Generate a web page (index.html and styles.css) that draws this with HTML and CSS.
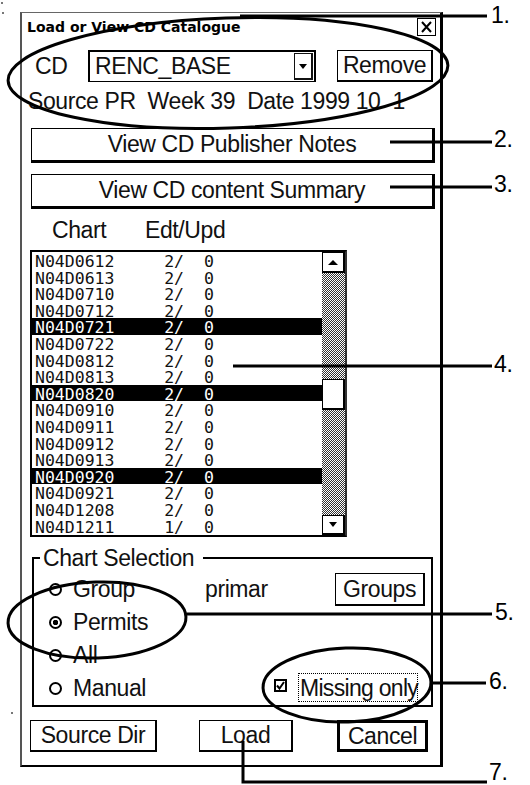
FILE: index.html
```html
<!DOCTYPE html>
<html lang="en">
<head>
  <meta charset="UTF-8" />
  <meta name="viewport" content="width=device-width, initial-scale=1.0"/>
  <title>Load or View CD Catalogue</title>
  <link rel="stylesheet" href="styles.css">
</head>
<body>
  <div class="dialog">
    <div class="titlebar">
      <span class="title">Load or View CD Catalogue</span>
      <span class="close">
        <svg width="17" height="16" viewBox="0 0 17 16"><path d="M4 3 L13 13 M13 3 L4 13" stroke="#000" stroke-width="2"/></svg>
      </span>
    </div>

    <div class="cd-row">
      <span class="cd-label">CD</span>
      <div class="combo">
        <span class="combo-text">RENC_BASE</span>
        <span class="combo-btn"><span class="tri-down"></span></span>
      </div>
      <button type="button" class="btn btn-remove">Remove</button>
    </div>

    <div class="source">Source PR  Week 39  Date 1999 10  1</div>

    <button type="button" class="btn wide">View CD Publisher Notes</button>
    <button type="button" class="btn wide second">View CD content Summary</button>

    <div class="list-head"><span class="h-chart">Chart</span><span>Edt/Upd</span></div>

    <div class="list">
      <div class="rows">
        <div class="row">N04D0612     2/  0</div>
        <div class="row">N04D0613     2/  0</div>
        <div class="row">N04D0710     2/  0</div>
        <div class="row">N04D0712     2/  0</div>
        <div class="row sel">N04D0721     2/  0</div>
        <div class="row">N04D0722     2/  0</div>
        <div class="row">N04D0812     2/  0</div>
        <div class="row">N04D0813     2/  0</div>
        <div class="row sel">N04D0820     2/  0</div>
        <div class="row">N04D0910     2/  0</div>
        <div class="row">N04D0911     2/  0</div>
        <div class="row">N04D0912     2/  0</div>
        <div class="row">N04D0913     2/  0</div>
        <div class="row sel">N04D0920     2/  0</div>
        <div class="row">N04D0921     2/  0</div>
        <div class="row">N04D1208     2/  0</div>
        <div class="row">N04D1211     1/  0</div>
      </div>
      <div class="scrollbar">
        <span class="sb-btn up"><span class="tri-up"></span></span>
        <span class="track-top"></span>
        <span class="thumb"></span>
        <span class="track-rest"></span>
        <span class="sb-btn down"><span class="tri-down"></span></span>
      </div>
    </div>

    <fieldset class="selection">
      <legend>Chart Selection</legend>
      <div class="sel-row">
        <span class="opt"><span class="radio"></span>Group</span>
        <span>primar</span>
        <button type="button" class="btn btn-groups">Groups</button>
      </div>
      <div class="sel-row">
        <span class="opt"><span class="radio on"></span>Permits</span>
      </div>
      <div class="sel-row">
        <span class="opt"><span class="radio"></span>All</span>
      </div>
      <div class="sel-row">
        <span class="opt"><span class="radio"></span>Manual</span>
        <span class="missing">
          <span class="check">
            <svg width="9" height="9" viewBox="0 0 9 9"><path d="M1 4.5 L3.5 7.5 L8 1" stroke="#000" stroke-width="2" fill="none"/></svg>
          </span>
          <span class="focus">Missing only</span>
        </span>
      </div>
    </fieldset>

    <div class="actions">
      <button type="button" class="btn btn-source">Source Dir</button>
      <button type="button" class="btn btn-load">Load</button>
      <button type="button" class="btn btn-cancel">Cancel</button>
    </div>
  </div>

  <!-- callout annotations drawn over the dialog -->
  <svg class="callouts" width="530" height="785" viewBox="0 0 530 785">
    <g fill="none" stroke="#000" stroke-width="3">
      <ellipse cx="228" cy="73" rx="220" ry="55" transform="rotate(-2 228 73)"/>
      <ellipse cx="97" cy="620" rx="89" ry="38" transform="rotate(-2 97 620)"/>
      <ellipse cx="347" cy="685" rx="84" ry="37" transform="rotate(-2 347 685)"/>
      <path d="M240 16 H487"/>
      <path d="M390 142 H492"/>
      <path d="M390 187 H492"/>
      <path d="M233 366 H492"/>
      <path d="M187 614 H492"/>
      <path d="M430 683 H486"/>
      <path d="M243 741 V782 H487"/>
    </g>
    <g class="nums">
      <text x="491" y="23">1.</text>
      <text x="494" y="147">2.</text>
      <text x="494" y="192">3.</text>
      <text x="494" y="372">4.</text>
      <text x="495" y="620">5.</text>
      <text x="489" y="689">6.</text>
      <text x="489" y="780">7.</text>
    </g>
    <g fill="#777">
      <rect x="1" y="2" width="2" height="2"/>
      <rect x="2" y="12" width="2" height="2"/>
      <rect x="11" y="712" width="2" height="2"/>
    </g>
  </svg>
</body>
</html>
```

FILE: styles.css
```css
body {
  margin: 0;
  background: #fff;
  color: #111;
  font-family: "Liberation Sans", Arial, sans-serif;
  font-size: 23px;
  letter-spacing: -0.4px;
}
.dialog {
  margin: 12px 0 0 20px;
  width: 423px;
  height: 755px;
  box-sizing: border-box;
  border-top: 1px solid #666;
  border-left: 2px solid #555;
  border-right: 3px solid #000;
  border-bottom: 2px solid #000;
  display: flex;
  flex-direction: column;
}
.titlebar {
  height: 27px;
  display: flex;
  align-items: center;
  justify-content: space-between;
  padding: 0 4px 0 5px;
}
.title {
  font: bold 14px "DejaVu Sans", sans-serif;
  letter-spacing: 0;
  color: #000;
}
.close {
  width: 19px;
  height: 18px;
  box-sizing: border-box;
  border: 1px solid #000;
  display: flex;
}
.btn {
  font: inherit;
  letter-spacing: inherit;
  color: #111;
  background: #fff;
  padding: 0;
  box-sizing: border-box;
  border-style: solid;
  border-color: #000;
  border-width: 1px 2px 2px 1px;
  line-height: 1;
  white-space: nowrap;
}
.cd-row {
  margin-top: 10px;
  height: 32px;
  display: flex;
  align-items: center;
  padding-left: 13px;
}
.cd-label {
  width: 53px;
}
.combo {
  width: 228px;
  height: 32px;
  box-sizing: border-box;
  border: 2px solid #000;
  border-width: 2px 2px 1px 2px;
  display: flex;
  align-items: center;
}
.combo-text {
  flex: 1;
  padding-left: 5px;
}
.combo-btn {
  width: 19px;
  height: 27px;
  margin-right: 1px;
  box-sizing: border-box;
  border-style: solid;
  border-width: 1px 2px 2px 1px;
  display: flex;
  align-items: center;
  justify-content: center;
}
.tri-down {
  border-left: 4px solid transparent;
  border-right: 4px solid transparent;
  border-top: 5px solid #000;
}
.tri-up {
  border-left: 5px solid transparent;
  border-right: 5px solid transparent;
  border-bottom: 5px solid #000;
}
.btn-remove {
  margin-left: 21px;
  width: 96px;
  height: 32px;
}
.source {
  margin-top: 5px;
  height: 28px;
  line-height: 28px;
  padding-left: 6px;
  white-space: pre;
}
.wide {
  margin: 13px 0 0 9px;
  width: 404px;
  height: 35px;
  border-width: 1px 3px 3px 1px;
}
.wide.second {
  margin-top: 11px;
}
.list-head {
  margin-top: 7px;
  height: 28px;
  line-height: 28px;
  padding-left: 30px;
  display: flex;
}
.h-chart {
  width: 93px;
}
.list {
  margin: 6px 0 0 8px;
  width: 317px;
  height: 287px;
  box-sizing: border-box;
  border: 2px solid #000;
  border-right-color: #333;
  display: flex;
}
.rows {
  flex: 1;
}
.row {
  height: 16.6px;
  line-height: 16.6px;
  padding-left: 3px;
  font: 16.5px "DejaVu Sans Mono", monospace;
  letter-spacing: 0;
  white-space: pre;
  color: #111;
}
.row.sel {
  background: #000;
  color: #fff;
}
.scrollbar {
  width: 23px;
  display: flex;
  flex-direction: column;
  background-image: repeating-conic-gradient(#333 0% 25%, #fff 0% 50%);
  background-size: 2px 2px;
}
.sb-btn {
  height: 21px;
  background: #fff;
  box-sizing: border-box;
  border: 1px solid #000;
  border-width: 1px 2px 2px 1px;
  display: flex;
  align-items: center;
  justify-content: center;
}
.sb-btn.down {
  height: 20px;
}
.track-top {
  height: 106px;
}
.thumb {
  height: 31px;
  background: #fff;
  box-sizing: border-box;
  border: 1px solid #000;
  border-width: 1px 2px 2px 1px;
}
.track-rest {
  flex: 1;
}
.selection {
  margin: 9px 0 0 10px;
  width: 401px;
  box-sizing: border-box;
  border: 2px solid #000;
  padding: 3px 0 0 0;
  min-width: 0;
}
.selection legend {
  margin-left: 6px;
  padding: 0 9px 0 3px;
  line-height: 24px;
}
.sel-row {
  height: 33px;
  display: flex;
  align-items: center;
  padding: 0 6px 0 15px;
}
.opt {
  width: 156px;
  display: flex;
  align-items: center;
}
.radio {
  width: 13px;
  height: 13px;
  box-sizing: border-box;
  border: 2px solid #000;
  border-radius: 50%;
  margin-right: 11px;
}
.radio.on {
  background: radial-gradient(circle, #000 0 2.5px, transparent 3px);
}
.btn-groups {
  margin-left: auto;
  width: 90px;
  height: 33px;
}
.missing {
  margin-left: auto;
  margin-right: 7px;
  display: flex;
  align-items: center;
}
.check {
  width: 13px;
  height: 13px;
  box-sizing: border-box;
  border: 2px solid #000;
  margin: -6px 11px 0 0;
  display: flex;
  align-items: center;
  justify-content: center;
}
.focus {
  width: 120px;
  height: 29px;
  line-height: 29px;
  box-sizing: border-box;
  border: 1px dotted #000;
  padding: 0 0 0 1px;
  margin-top: -3px;
  letter-spacing: -0.7px;
  white-space: nowrap;
}
.actions {
  margin-top: 13px;
  height: 32px;
  display: flex;
}
.actions .btn {
  height: 32px;
}
.btn-source {
  margin-left: 8px;
  width: 127px;
}
.btn-load {
  margin-left: 42px;
  width: 94px;
}
.btn-cancel {
  margin-left: 44px;
  width: 91px;
  border-width: 3px;
}
.callouts {
  position: absolute;
  top: 0;
  left: 0;
  pointer-events: none;
}
.nums text {
  font-family: "Liberation Sans", Arial, sans-serif;
  font-size: 23px;
  fill: #000;
}
```
